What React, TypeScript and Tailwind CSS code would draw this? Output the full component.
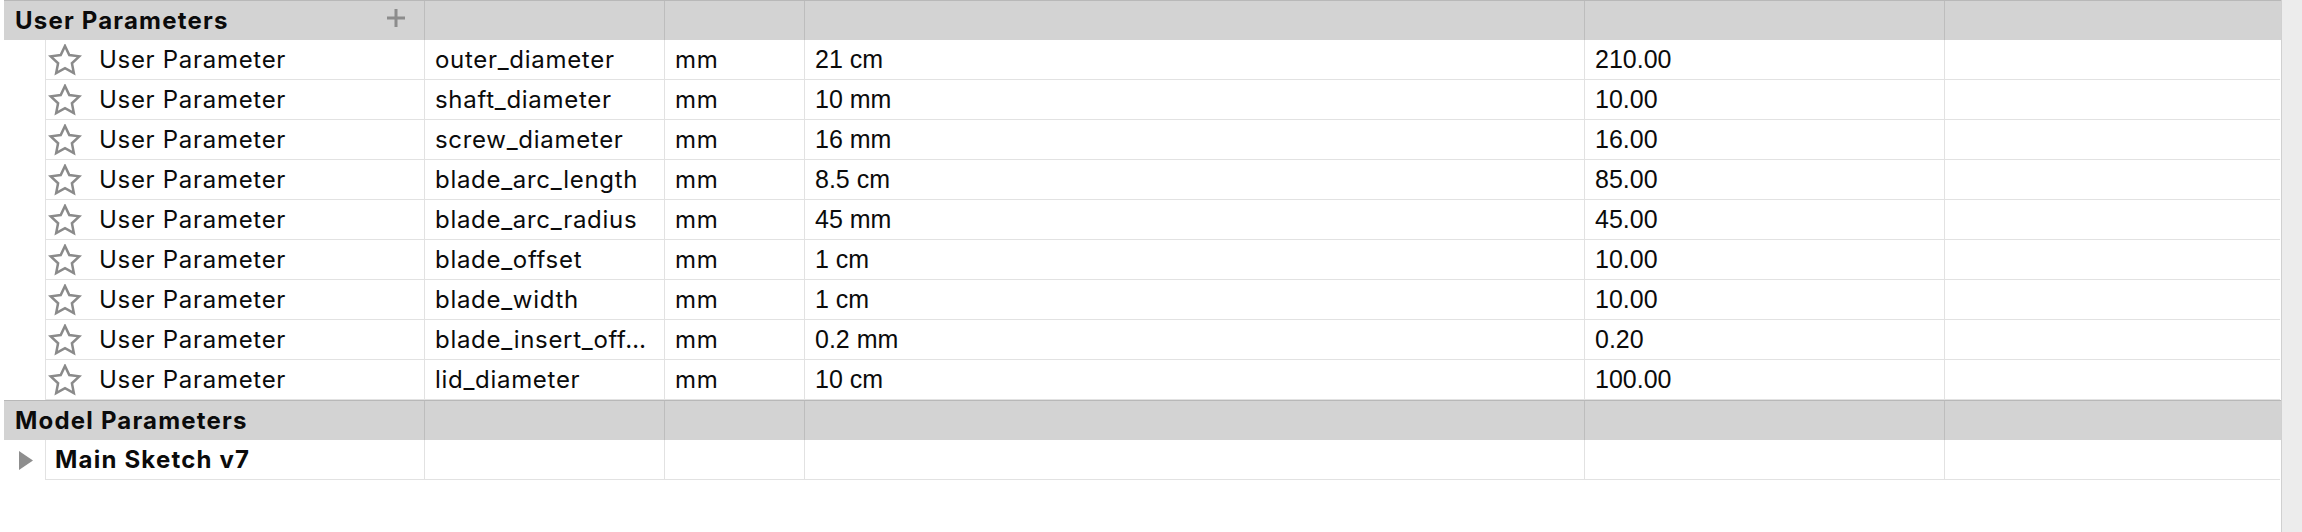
import React from 'react';

const userParams = [
  { name: 'outer_diameter', unit: 'mm', expr: '21 cm', value: '210.00' },
  { name: 'shaft_diameter', unit: 'mm', expr: '10 mm', value: '10.00' },
  { name: 'screw_diameter', unit: 'mm', expr: '16 mm', value: '16.00' },
  { name: 'blade_arc_length', unit: 'mm', expr: '8.5 cm', value: '85.00' },
  { name: 'blade_arc_radius', unit: 'mm', expr: '45 mm', value: '45.00' },
  { name: 'blade_offset', unit: 'mm', expr: '1 cm', value: '10.00' },
  { name: 'blade_width', unit: 'mm', expr: '1 cm', value: '10.00' },
  { name: 'blade_insert_off…', unit: 'mm', expr: '0.2 mm', value: '0.20' },
  { name: 'lid_diameter', unit: 'mm', expr: '10 cm', value: '100.00' },
];

const StarIcon = () => (
  <svg width="34" height="32" viewBox="0 0 34 33" className="shrink-0">
    <polygon
      points="17,2 21.41,11.43 31.74,12.71 24.13,19.82 26.11,30.04 17,25 7.89,30.04 9.87,19.82 2.26,12.71 12.59,11.43"
      fill="#fff"
      stroke="#8a8a8a"
      strokeWidth="2.6"
      strokeLinejoin="miter"
    />
  </svg>
);

const cell = 'h-full flex items-center border-l border-b border-[#e2e2e2] overflow-hidden';
const sf = "font-['Inter',sans-serif] text-[24px] tracking-[0.7px] text-[#0b0b0b] whitespace-nowrap";
const sfBold = "font-['Inter',sans-serif] text-[24px] font-bold tracking-[1.2px] text-[#0b0b0b] whitespace-nowrap";
const arial = "font-['Liberation_Sans',sans-serif] text-[25px] text-[#0b0b0b] whitespace-nowrap";

const SectionHeader = ({ title, plus }: { title: string; plus?: boolean }) => (
  <div className="flex h-10 ml-1 bg-[#d3d3d3] border-t border-[#b8b8b8]">
    <div className="w-[420px] flex items-center justify-between pl-[11px] pr-[18px]">
      <span className={sfBold}>{title}</span>
      {plus && (
        <svg width="20" height="20" viewBox="0 0 20 20" className="-mt-[6px]">
          <path d="M10 1v18M1 10h18" stroke="#8c8c8c" strokeWidth="3" />
        </svg>
      )}
    </div>
    <div className="w-[240px] border-l border-[#bdbdbd]" />
    <div className="w-[140px] border-l border-[#bdbdbd]" />
    <div className="w-[780px] border-l border-[#bdbdbd]" />
    <div className="w-[360px] border-l border-[#bdbdbd]" />
    <div className="w-[332px] border-l border-[#bdbdbd]" />
  </div>
);

const App = () => {
  return (
    <div className="w-[2302px] h-[532px] flex bg-white overflow-hidden">
      <div className="w-[2281px] flex flex-col">
        {/* User Parameters */}
        <SectionHeader title="User Parameters" plus />
        {userParams.map((p) => (
          <div key={p.name} className="flex h-10">
            <div className="w-[45px] shrink-0" />
            <div className={`${cell} w-[379px] pl-[2px] gap-[17px]`}>
              <StarIcon />
              <span className={sf}>User Parameter</span>
            </div>
            <div className={`${cell} w-[240px] px-[10px]`}>
              <span className={sf}>{p.name}</span>
            </div>
            <div className={`${cell} w-[140px] px-[10px]`}>
              <span className={sf}>{p.unit}</span>
            </div>
            <div className={`${cell} w-[780px] px-[10px]`}>
              <span className={arial}>{p.expr}</span>
            </div>
            <div className={`${cell} w-[360px] px-[10px]`}>
              <span className={arial}>{p.value}</span>
            </div>
            <div className={`${cell} w-[336px]`} />
          </div>
        ))}

        {/* Model Parameters */}
        <SectionHeader title="Model Parameters" />
        <div className="flex h-10">
          <div className="w-[45px] shrink-0 flex items-center pl-[19px]">
            <svg width="14" height="19" viewBox="0 0 14 19">
              <polygon points="0,0 14,9.5 0,19" fill="#8e8e8e" />
            </svg>
          </div>
          <div className={`${cell} w-[379px] pl-[9px]`}>
            <span className={sfBold}>Main Sketch v7</span>
          </div>
          <div className={`${cell} w-[240px]`} />
          <div className={`${cell} w-[140px]`} />
          <div className={`${cell} w-[780px]`} />
          <div className={`${cell} w-[360px]`} />
          <div className={`${cell} w-[336px]`} />
        </div>
      </div>
      {/* scroll track */}
      <div className="flex-1 bg-[#ececec] border-l border-[#d0d0d0]" />
    </div>
  );
};

export default App;
